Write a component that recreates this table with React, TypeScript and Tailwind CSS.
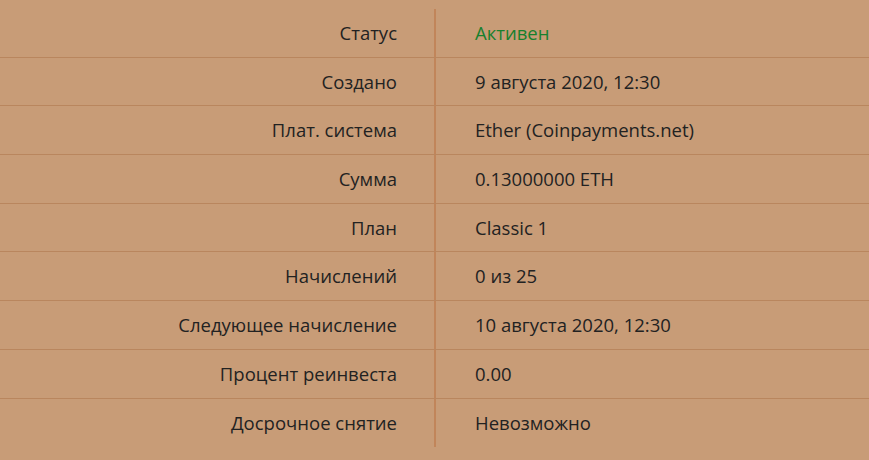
import React from "react";

const rows: [string, string, boolean?][] = [
  ["Статус", "Активен", true],
  ["Создано", "9 августа 2020, 12:30"],
  ["Плат. система", "Ether (Coinpayments.net)"],
  ["Сумма", "0.13000000 ETH"],
  ["План", "Classic 1"],
  ["Начислений", "0 из 25"],
  ["Следующее начисление", "10 августа 2020, 12:30"],
  ["Процент реинвеста", "0.00"],
  ["Досрочное снятие", "Невозможно"],
];

export default function App() {
  return (
    <div
      className="w-[869px] h-[460px] bg-[#c89c77] pt-[9px] overflow-hidden"
      style={{ fontFamily: '"Open Sans", sans-serif' }}
    >
      <div className="flex flex-col">
        {rows.map(([k, v, green], i) => (
          <div
            key={k}
            className={
              "flex h-[48.7px] " +
              (i < rows.length - 1 ? "border-b border-[#b9865e]" : "")
            }
          >
            <div className="w-[436px] shrink-0 flex items-center justify-end pr-[37px] border-r-[2px] border-[#c1855a] text-[18.5px] text-[#222222]">
              {k}
            </div>
            <div
              className={
                "flex-1 flex items-center pl-[39px] text-[18.5px] " +
                (green ? "text-[#17802e]" : "text-[#222222]")
              }
            >
              {v}
            </div>
          </div>
        ))}
      </div>
    </div>
  );
}
